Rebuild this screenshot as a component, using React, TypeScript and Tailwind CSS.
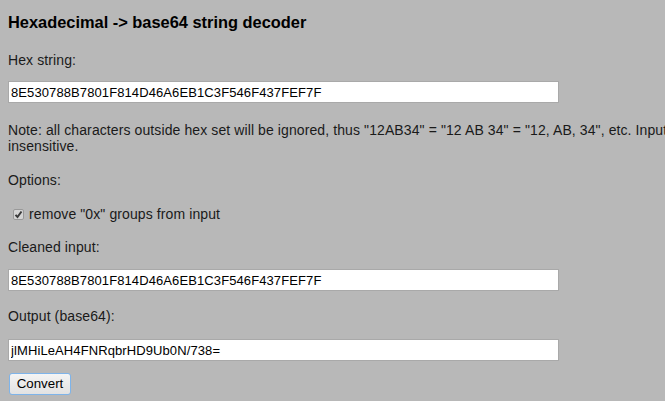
const font = "font-['Liberation_Sans',Arial,sans-serif]";

function TextBox({ value, className }: { value: string; className?: string }) {
  return (
    <input
      type="text"
      readOnly
      value={value}
      className={`block w-[551px] h-[22px] bg-white border border-[#a9a9a9] px-[2px] text-[13px] text-black outline-none ${font} ${className ?? ""}`}
    />
  );
}

export default function App() {
  return (
    <div className={`w-full h-[401px] overflow-hidden bg-[#b8b8b8] text-[#1a1a1a] ${font}`}>
      <div className="w-[745px] pl-[8px] tracking-[0.1px]">
        <h3 className="pt-[13px] text-[16.4px] leading-[19px] font-bold text-black tracking-normal">
          Hexadecimal -&gt; base64 string decoder
        </h3>

        <p className="mt-[20px] text-[14px] leading-[16px]">Hex string:</p>
        <TextBox value="8E530788B7801F814D46A6EB1C3F546F437FEF7F" className="mt-[13px]" />

        <p className="mt-[19px] text-[14px] leading-[16px]">
          Note: all characters outside hex set will be ignored, thus "12AB34" = "12 AB 34" = "12, AB, 34", etc. Input is case insensitive.
        </p>

        <p className="mt-[18px] text-[14px] leading-[16px]">Options:</p>

        {/* checkbox row */}
        <label className="mt-[18px] flex items-center h-[16px] text-[14px] leading-[16px]">
          <span className="ml-[5px] mr-[5px] w-[11px] h-[11px] flex items-center justify-center rounded-[2px] border border-[#999] bg-[#d4d4d4]">
            <svg width="9" height="9" viewBox="0 0 9 9">
              <path d="M1.5 4.8 L3.5 7 L7.5 1.5" fill="none" stroke="#3a3a3a" strokeWidth="2" />
            </svg>
          </span>
          remove "0x" groups from input
        </label>

        <p className="mt-[17px] text-[14px] leading-[16px]">Cleaned input:</p>
        <TextBox value="8E530788B7801F814D46A6EB1C3F546F437FEF7F" className="mt-[14px]" />

        <p className="mt-[17px] text-[14px] leading-[16px]">Output (base64):</p>
        <TextBox value="jlMHiLeAH4FNRqbrHD9Ub0N/738=" className="mt-[15px]" />

        <button className="mt-[12px] ml-[1px] w-[62px] h-[22px] rounded-[3px] border border-[#7eb4ea] bg-gradient-to-b from-[#f4f4f4] to-[#e2e2e2] text-[13.3px] text-black tracking-normal">
          Convert
        </button>
      </div>
    </div>
  );
}
